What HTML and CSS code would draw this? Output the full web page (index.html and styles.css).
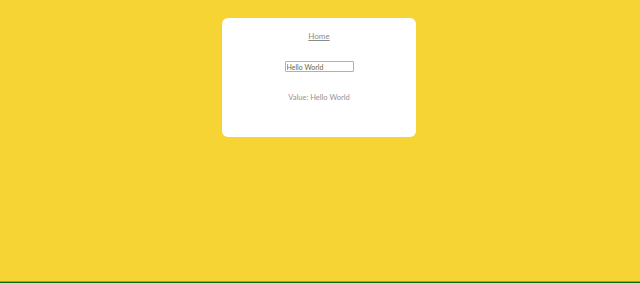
FILE: index.html
```html
<!DOCTYPE html>
<html lang="en">
<head>
    <meta charset="UTF-8">
    <title>Home</title>
    <link rel="stylesheet" href="styles.css">
</head>
<body>
    <div class="page">
        <div class="card">
            <a class="home-link" href="#">Home</a>
            <input class="text-input" type="text" value="Hello World">
            <p class="value">Value: Hello World</p>
        </div>
    </div>
    <div class="footer-line"></div>
</body>
</html>
```

FILE: styles.css
```css
html, body {
    height: 100%;
}
body {
    margin: 0;
    background-color: #f5d433;
    font-family: "Lato", "Open Sans", sans-serif;
    display: flex;
    flex-direction: column;
}
.page {
    flex: 1;
    display: flex;
    justify-content: center;
    align-items: flex-start;
    padding-top: 18px;
}
.card {
    width: 194px;
    height: 119px;
    margin-left: -2px;
    background-color: #fff;
    border-radius: 6px;
    display: flex;
    flex-direction: column;
    align-items: center;
    box-sizing: border-box;
    padding-top: 13px;
}
.home-link {
    font-size: 8px;
    color: #8a8a8a;
    text-decoration: underline;
}
.text-input {
    margin-top: 20px;
    width: 69px;
    height: 11px;
    box-sizing: border-box;
    padding: 0 1px;
    font-family: "Lato", sans-serif;
    font-size: 7px;
    color: #6a6a3a;
    border: 1px solid #b0b0b0;
    border-radius: 1px;
}
.value {
    margin: 21px 0 0;
    font-size: 7.5px;
    color: #949494;
}
.footer-line {
    height: 2px;
    background: linear-gradient(#33dd22 50%, #0a6a0a 50%);
}
```
